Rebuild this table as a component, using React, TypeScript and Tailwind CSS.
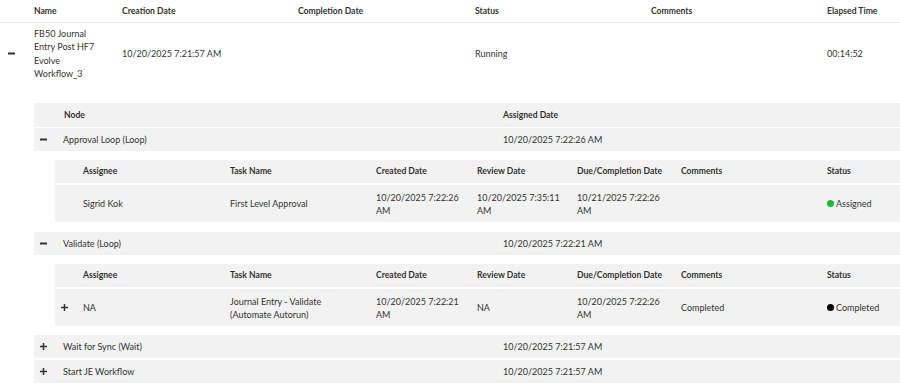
import React from "react";

const font = { fontFamily: "Lato, 'Open Sans', sans-serif" };

function Minus() {
  return (
    <svg width="7" height="7" viewBox="0 0 7 7" className="block">
      <rect x="0" y="2.5" width="7" height="2" fill="#333" />
    </svg>
  );
}

function Plus() {
  return (
    <svg width="7" height="7" viewBox="0 0 7 7" className="block">
      <rect x="0" y="2.75" width="7" height="1.5" fill="#333" />
      <rect x="2.75" y="0" width="1.5" height="7" fill="#333" />
    </svg>
  );
}

const taskCols = "grid grid-cols-[28px_147px_146px_101px_100px_104px_146px_1fr]";

type Task = {
  expand: boolean;
  assignee: string;
  task: string;
  created: string;
  review: string;
  due: string;
  comments: string;
  status: string;
  dot: string;
};

function TaskTable({ t }: { t: Task }) {
  return (
    <div className="pl-[21px] mt-[9px]">
      <div className={`${taskCols} h-[23px] items-center bg-[#f2f2f2] font-bold text-[8.6px] text-[#333]`}>
        <div />
        <div>Assignee</div>
        <div>Task Name</div>
        <div>Created Date</div>
        <div>Review Date</div>
        <div>Due/Completion Date</div>
        <div>Comments</div>
        <div>Status</div>
      </div>
      <div className={`${taskCols} mt-[2px] h-[37px] items-center bg-[#f2f2f2] text-[9px] leading-[13px] text-[#333]`}>
        <div className="pl-[6px]">{t.expand ? <Plus /> : null}</div>
        <div>{t.assignee}</div>
        <div className="pr-4">{t.task}</div>
        <div className="pr-2">{t.created}</div>
        <div className="pr-2">{t.review}</div>
        <div className="pr-2">{t.due}</div>
        <div>{t.comments}</div>
        <div className="flex items-center gap-[2px]">
          <span className={`inline-block w-[7px] h-[7px] rounded-full ${t.dot}`} />
          <span>{t.status}</span>
        </div>
      </div>
    </div>
  );
}

function NodeRow({ open, name, date, gap }: { open: boolean; name: string; date: string; gap: string }) {
  return (
    <div className={`grid grid-cols-[29px_440px_1fr] h-[23px] items-center bg-[#f2f2f2] text-[9px] text-[#333] ${gap}`}>
      <div className="pl-[6px]">{open ? <Minus /> : <Plus />}</div>
      <div>{name}</div>
      <div>{date}</div>
    </div>
  );
}

export default function App() {
  return (
    <div className="w-[900px] h-[389px] bg-white overflow-hidden text-[#333]" style={font}>
      {/* main header */}
      <div className="grid grid-cols-[34px_88px_176px_177px_176px_176px_1fr] h-[23px] items-center border-b border-[#e6e6e6] font-bold text-[8.6px]">
        <div />
        <div>Name</div>
        <div>Creation Date</div>
        <div>Completion Date</div>
        <div>Status</div>
        <div>Comments</div>
        <div>Elapsed Time</div>
      </div>

      {/* main row */}
      <div className="grid grid-cols-[34px_88px_176px_177px_176px_176px_1fr] items-center py-[4px] text-[9px] leading-[13.3px]">
        <div className="pl-[8px]"><Minus /></div>
        <div className="w-[66px]">FB50 Journal Entry Post HF7 Evolve Workflow_3</div>
        <div>10/20/2025 7:21:57 AM</div>
        <div />
        <div>Running</div>
        <div />
        <div>00:14:52</div>
      </div>

      {/* nested nodes */}
      <div className="pl-[34px] pt-[19px]">
        <div className="grid grid-cols-[29px_440px_1fr] h-[24px] items-center bg-[#f2f2f2] font-bold text-[8.6px]">
          <div />
          <div className="pl-[1px]">Node</div>
          <div>Assigned Date</div>
        </div>

        <NodeRow open name="Approval Loop (Loop)" date="10/20/2025 7:22:26 AM" gap="mt-[1px]" />
        <TaskTable
          t={{
            expand: false,
            assignee: "Sigrid Kok",
            task: "First Level Approval",
            created: "10/20/2025 7:22:26 AM",
            review: "10/20/2025 7:35:11 AM",
            due: "10/21/2025 7:22:26 AM",
            comments: "",
            status: "Assigned",
            dot: "bg-[#1fb83a]",
          }}
        />

        <NodeRow open name="Validate (Loop)" date="10/20/2025 7:22:21 AM" gap="mt-[10px]" />
        <TaskTable
          t={{
            expand: true,
            assignee: "NA",
            task: "Journal Entry - Validate (Automate Autorun)",
            created: "10/20/2025 7:22:21 AM",
            review: "NA",
            due: "10/20/2025 7:22:26 AM",
            comments: "Completed",
            status: "Completed",
            dot: "bg-black",
          }}
        />

        <NodeRow open={false} name="Wait for Sync (Wait)" date="10/20/2025 7:21:57 AM" gap="mt-[9px]" />
        <NodeRow open={false} name="Start JE Workflow" date="10/20/2025 7:21:57 AM" gap="mt-[2px]" />
      </div>
    </div>
  );
}
